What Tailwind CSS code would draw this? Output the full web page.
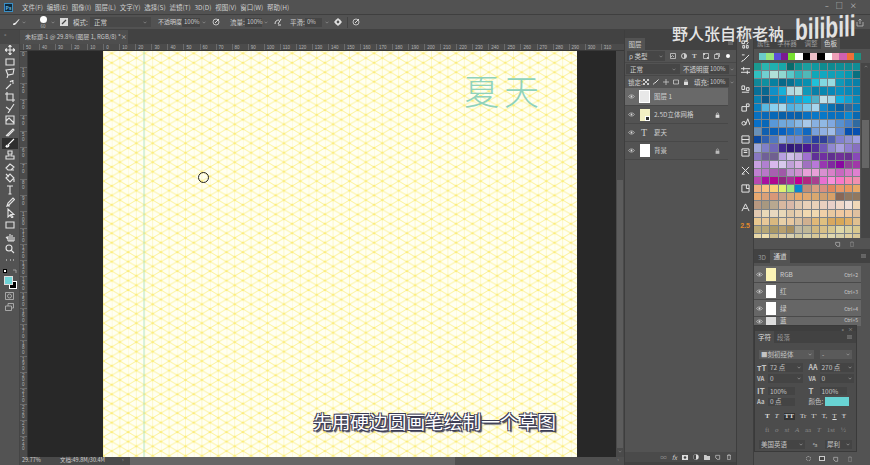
<!DOCTYPE html>
<html lang="zh-CN">
<head>
<meta charset="UTF-8">
<title>Photoshop</title>
<script src="https://cdn.jsdelivr.net/npm/@tailwindcss/browser@4"></script>
</head>
<body class="bg-[#535353]">
<!-- icon symbols -->
<svg class="hidden">
  <symbol id="eye" viewBox="0 0 12 8"><path d="M1 4c2-3.600 8-3.600 10 0-2 3.600-8 3.600-10 0z" fill="none" stroke="currentColor"/><circle cx="6" cy="4" r="1.600" fill="currentColor"/></symbol>
  <symbol id="lock" viewBox="0 0 8 9"><path d="M1 4h6v5H1z" fill="currentColor"/><path d="M2.500 4V2.500a1.500 1.500 0 013 0V4" fill="none" stroke="currentColor"/></symbol>
  <symbol id="chev" viewBox="0 0 6 4"><path d="M.8 .8L3 3l2.200-2.200" fill="none" stroke="currentColor" stroke-width=".8"/></symbol>
  <symbol id="trash" viewBox="0 0 8 9"><path d="M1 2h6M3 1h2M2 2v6.500h4V2" fill="none" stroke="currentColor"/></symbol>
  <symbol id="newdoc" viewBox="0 0 9 9"><path d="M1 2h6v6H3M1 2v4" fill="none" stroke="currentColor"/><path d="M1 6h2v2" fill="currentColor"/></symbol>
  <symbol id="menu" viewBox="0 0 6 4"><path d="M0 .5h6M0 2h6M0 3.500h6" stroke="currentColor" stroke-width=".7"/></symbol>
</svg>

<div class="relative w-[870px] h-[465px] overflow-hidden flex flex-col whitespace-nowrap text-[#cfcfcf] text-[6.500px] leading-none [font-family:'Noto_Sans_CJK_SC','Liberation_Sans',sans-serif]">

  <!-- menu bar -->
  <div class="h-[15px] shrink-0 flex items-center bg-[#525252] border-b border-[#3f3f3f]">
    <div class="ml-[4px] w-[9px] h-[9px] bg-[#0d2b40] border border-[#3a8ec4] text-[#6cc0f0] text-[5px] font-bold flex items-center justify-center">Ps</div>
    <div class="ml-[9px] flex gap-[3.800px]">
      <span>文件(F)</span><span>编辑(E)</span><span>图像(I)</span><span>图层(L)</span><span>文字(Y)</span><span>选择(S)</span><span>滤镜(T)</span><span>3D(D)</span><span>视图(V)</span><span>窗口(W)</span><span>帮助(H)</span>
    </div>
  </div>

  <!-- options bar -->
  <div class="h-[15px] shrink-0 flex items-center bg-[#525252] border-b border-[#424242]">
    <svg class="ml-[12px] w-[8px] h-[8px] text-[#e8e8e8]" viewBox="0 0 8 8"><path d="M1 7c0-2 1-2 2-2L7 1 7.500 1.500 4 6C3.500 7 2 7 1 7z" fill="currentColor"/></svg>
    <svg class="ml-[2px] w-[4px] h-[3px] text-[#aaa]"><use href="#chev"/></svg>
    <div class="ml-[12px] w-[10px] flex flex-col items-center gap-[1px]"><span class="w-[7px] h-[7px] rounded-full bg-white"></span><span class="text-[4.500px] text-[#bbb]">60</span></div>
    <svg class="ml-[3px] w-[4px] h-[3px] text-[#aaa]"><use href="#chev"/></svg>
    <svg class="ml-[5px] w-[8px] h-[8px]" viewBox="0 0 8 8"><path d="M0 0h8v8H0z" fill="#d8d8d8"/><path d="M2 6l4-4" stroke="#444" stroke-width="1.200"/></svg>
    <span class="ml-[5px] w-[14px]">模式:</span>
    <div class="ml-[3px] w-[61px] h-[10px] bg-[#484848] flex items-center justify-between px-[4px]"><span>正常</span><svg class="w-[4px] h-[3px] text-[#aaa]"><use href="#chev"/></svg></div>
    <span class="ml-[7px] w-[24px] text-[6px]">不透明度:</span>
    <div class="w-[18px] h-[9px] bg-[#464646] flex items-center px-[2px] text-[6px]">100%</div>
    <svg class="ml-[2px] w-[4px] h-[3px] text-[#aaa]"><use href="#chev"/></svg>
    <svg class="ml-[6px] w-[8px] h-[8px] text-[#ddd]" viewBox="0 0 8 8"><circle cx="4" cy="4" r="3" fill="none" stroke="currentColor" stroke-width=".8"/><path d="M3 5l4-4" stroke="currentColor"/></svg>
    <span class="ml-[10px] w-[15px]">流量:</span>
    <div class="w-[17px] h-[9px] bg-[#464646] flex items-center px-[2px] text-[6px]">100%</div>
    <svg class="ml-[2px] w-[4px] h-[3px] text-[#aaa]"><use href="#chev"/></svg>
    <svg class="ml-[6px] w-[8px] h-[8px] text-[#ddd]" viewBox="0 0 8 8"><path d="M1 6c0-3 2-4 4-4M4 6l3-5M7 7H4" fill="none" stroke="currentColor"/></svg>
    <span class="ml-[8px] w-[15px]">平滑:</span>
    <div class="w-[17px] h-[9px] bg-[#464646] flex items-center px-[2px] text-[6px]">0%</div>
    <svg class="ml-[3px] w-[4px] h-[3px] text-[#aaa]"><use href="#chev"/></svg>
    <svg class="ml-[5px] w-[8px] h-[8px] text-[#e8e8e8]" viewBox="0 0 8 8"><circle cx="4" cy="4" r="2.200" fill="none" stroke="currentColor" stroke-width="1.600"/><path d="M4 0v1.500M4 6.500V8M0 4h1.500M6.500 4H8" stroke="currentColor"/></svg>
    <span class="ml-[5px] w-px h-[11px] bg-[#424242]"></span>
    <svg class="ml-[4px] w-[8px] h-[8px] text-[#ddd]" viewBox="0 0 8 8"><circle cx="4" cy="4" r="3" fill="none" stroke="currentColor" stroke-width=".8"/><path d="M3 5l4-4" stroke="currentColor"/></svg>
  </div>

  <!-- main -->
  <div class="flex-1 flex min-h-0">

    <!-- tools -->
    <div class="w-[20px] shrink-0 bg-[#535353] flex flex-col items-center border-r border-[#454545]">
      <div class="h-[14px] w-full bg-[#474747] text-[5px] text-[#999] pl-[4px] pt-[1px]">»</div>
      <div id="tools" class="flex flex-col items-center"></div>
      <div class="mt-[1px] w-[14px] flex justify-between items-center h-[8px]"><span class="w-[4px] h-[4px] bg-white border border-black"></span><svg class="w-[4px] h-[4px] text-[#bbb]" viewBox="0 0 4 4"><path d="M0 1h3v3" fill="none" stroke="currentColor" stroke-width=".7"/></svg></div>
      <div class="relative w-[14px] h-[14px]">
        <span class="absolute left-[6px] top-[6px] w-[8px] h-[8px] bg-black border border-white"></span>
        <span class="absolute left-[1px] top-[1px] w-[9px] h-[9px] bg-[#6fd3d6] border border-[#ddd]"></span>
      </div>
      <svg class="mt-[3px] w-[9px] h-[8px] text-[#bbb]" viewBox="0 0 9 8"><path d="M.5 .5h8v7h-8z" fill="none" stroke="currentColor" stroke-width=".8"/><circle cx="4.500" cy="4" r="2" fill="none" stroke="currentColor" stroke-width=".8"/></svg>
      <svg class="mt-[3px] w-[9px] h-[8px] text-[#bbb]" viewBox="0 0 9 8"><path d="M.5 3h6v4.500h-6zM3 3V.5h5.500V5H7" fill="none" stroke="currentColor" stroke-width=".8"/></svg>
    </div>

    <!-- document window -->
    <div class="w-[604px] shrink-0 flex flex-col min-h-0">
      <div class="h-[14px] shrink-0 bg-[#424242] flex items-stretch">
        <div class="w-[108px] bg-[#4e4e4e] flex items-center justify-between px-[5px] text-[#c8c8c8] text-[6px]"><span>未标题-1 @ 29.8% (图层 1, RGB/8) *</span><span>×</span></div>
      </div>
      <div class="h-[7px] shrink-0 flex bg-[#4b4b4b] overflow-hidden border-b border-[#383838]">
        <div id="rulerTop" class="flex ml-[3px] shrink-0"></div>
      </div>
      <div class="flex-1 flex min-h-0">
        <div id="rulerLeft" class="w-[8px] shrink-0 bg-[#4b4b4b] border-r border-[#383838] flex flex-col overflow-hidden"></div>
        <div class="w-[588px] shrink-0 flex bg-[#282828]">
          <div class="w-[75px] shrink-0"></div>
          <div class="relative w-[474px] shrink-0 bg-white overflow-hidden">
            <svg class="absolute inset-0 w-full h-full">
              <defs>
                <pattern id="iso" width="16.400" height="9.470" patternUnits="userSpaceOnUse" patternTransform="translate(8.700 2.300)">
                  <path d="M0 0V9.470M8.200 0V9.470" stroke="#fdf8c4" stroke-width="1" fill="none"/>
                  <path d="M0 0L16.400 9.470M0 9.470L16.400 0" stroke="#fcf29a" stroke-width="1" fill="none"/>
                  <g fill="#fbec7c">
                    <circle cx="0" cy="0" r="1.300"/><circle cx="16.400" cy="0" r="1.300"/><circle cx="0" cy="9.470" r="1.300"/><circle cx="16.400" cy="9.470" r="1.300"/><circle cx="8.200" cy="4.735" r="1.300"/>
                  </g>
                </pattern>
              </defs>
              <rect width="100%" height="100%" fill="#fffff2"/>
              <rect width="100%" height="100%" fill="url(#iso)"/>
              <path d="M41 0V406" stroke="#b4e6c8" stroke-width="1"/>
            </svg>
            <div class="absolute left-[361px] top-[17px] text-[35px] leading-[44px] tracking-[5px] font-light text-[#8ed2bc]">夏天</div>
            <div class="absolute left-[95px] top-[121px] w-[11px] h-[11px] rounded-full border border-[#222]"></div>
          </div>
          <div class="w-[39px] shrink-0"></div>
        </div>
        <div class="w-[8px] shrink-0 bg-[#4a4a4a] flex flex-col items-center">
          <div class="h-[129px]"></div>
          <div class="w-[6px] h-[268px] bg-[#5c5c5c]"></div>
          <svg class="mt-[2px] w-[4px] h-[3px] text-[#999]"><use href="#chev"/></svg>
        </div>
      </div>
      <div class="h-[8px] shrink-0 flex items-center bg-[#4a4a4a] text-[5.500px]">
        <span class="ml-[2px] w-[38px]">29.77%</span>
        <span class="w-[62px]">文档:49.8M/30.4M</span>
        <span class="w-[8px] text-[#aaa]">›</span>
        <div class="w-[325px] h-full bg-[#666]"></div>
        <div class="flex-1 h-full bg-[#505050] flex justify-end items-center pr-[5px] text-[#999]">›</div>
      </div>
    </div>

    <!-- layers panel -->
    <div class="w-[112px] shrink-0 flex flex-col bg-[#535353] border-l border-[#3e3e3e]">
      <div class="h-[20px] shrink-0 bg-[#424242] flex items-end justify-between pr-[3px]"><div class="w-[20px] h-[12px] bg-[#535353] flex items-center justify-center">图层</div><svg class="mb-[5px] w-[5px] h-[4px] text-[#999]"><use href="#menu"/></svg></div>
      <div class="h-[13px] shrink-0 flex items-center pl-[2px] border-b border-[#484848]">
        <div class="w-[38px] h-[10px] bg-[#464646] flex items-center px-[2px] justify-between"><span>ρ 类型</span><svg class="w-[4px] h-[3px] text-[#aaa]"><use href="#chev"/></svg></div>
        <div class="ml-[5px] flex items-center gap-[5px]">
          <svg class="w-[6px] h-[6px] text-[#ccc]" viewBox="0 0 6 6"><path d="M.5 .5h5v5h-5zM1 4l1.500-1.500L4 4" fill="none" stroke="currentColor" stroke-width=".8"/></svg>
          <svg class="w-[6px] h-[6px] text-[#ccc]" viewBox="0 0 6 6"><circle cx="3" cy="3" r="2.500" fill="none" stroke="currentColor"/><path d="M3 .5a2.500 2.500 0 010 5z" fill="currentColor"/></svg>
          <span class="w-[6px] text-[7px] font-bold [font-family:'Liberation_Serif',serif]">T</span>
          <svg class="w-[6px] h-[6px] text-[#ccc]" viewBox="0 0 6 6"><path d="M.5 .5h5v5h-5z" fill="none" stroke="currentColor" stroke-width=".8"/><path d="M0 0h2v2H0zM4 4h2v2H4z" fill="currentColor"/></svg>
          <svg class="w-[6px] h-[6px] text-[#ccc]" viewBox="0 0 6 6"><path d="M.5 1.500h4v4h-4zM2 1.500V.5h3.500V4" fill="none" stroke="currentColor" stroke-width=".8"/></svg>
          <span class="ml-[1px] w-[4px] h-[4px] rounded-full bg-white"></span>
        </div>
      </div>
      <div class="h-[13px] shrink-0 flex items-center pl-[1px] border-b border-[#484848]">
        <div class="w-[54px] h-[10px] bg-[#464646] flex items-center px-[4px] justify-between"><span>正常</span><svg class="w-[4px] h-[3px] text-[#aaa]"><use href="#chev"/></svg></div>
        <span class="ml-[3px] w-[26px]">不透明度:</span>
        <div class="w-[20px] h-[9px] bg-[#464646] flex items-center px-[1px] text-[6px]">100%</div>
        <svg class="ml-[1px] w-[4px] h-[3px] text-[#aaa]"><use href="#chev"/></svg>
      </div>
      <div class="h-[12px] shrink-0 flex items-center pl-[3px]">
        <span class="w-[15px]">锁定:</span>
        <div class="flex items-center gap-[4px]">
          <svg class="w-[6px] h-[6px] text-[#ccc]" viewBox="0 0 6 6"><path d="M0 0h2v2H0zM4 0h2v2H4zM2 2h2v2H2zM0 4h2v2H0zM4 4h2v2H4z" fill="currentColor"/></svg>
          <svg class="w-[6px] h-[6px] text-[#ddd]" viewBox="0 0 6 6"><path d="M.5 5.500c0-1.500 1-1.500 1.500-1.500L5.500 .5" fill="none" stroke="currentColor"/></svg>
          <svg class="w-[6px] h-[6px] text-[#ccc]" viewBox="0 0 6 6"><path d="M3 0v6M0 3h6" stroke="currentColor" stroke-width=".8"/></svg>
          <svg class="w-[6px] h-[6px] text-[#ccc]" viewBox="0 0 6 6"><path d="M.5 1h5v4h-5z" fill="none" stroke="currentColor" stroke-width=".8"/></svg>
          <svg class="w-[6px] h-[6px] text-[#ddd]"><use href="#lock"/></svg>
        </div>
        <span class="ml-[5px] w-[15px]">填充:</span>
        <div class="w-[20px] h-[9px] bg-[#464646] flex items-center px-[1px] text-[6px]">100%</div>
        <svg class="ml-[1px] w-[4px] h-[3px] text-[#aaa]"><use href="#chev"/></svg>
      </div>
      <div class="w-[103px] flex flex-col">
        <div class="h-[18px] flex items-center bg-[#696969] border-b border-[#484848]">
          <svg class="ml-[3px] w-[7px] h-[5px] text-[#ddd]"><use href="#eye"/></svg>
          <div class="ml-[4px] w-[11px] h-[13px] bg-[#e8e8e8] border border-white"></div>
          <span class="ml-[4px]">图层 1</span>
        </div>
        <div class="h-[18px] flex items-center border-b border-[#484848]">
          <svg class="ml-[3px] w-[7px] h-[5px] text-[#ddd]"><use href="#eye"/></svg>
          <div class="relative ml-[5px] w-[10px] h-[12px] bg-[#f3f0c4]"><span class="absolute right-0 bottom-0 w-[5px] h-[5px] bg-[#333] border border-white"></span></div>
          <span class="ml-[4px] flex-1">2.5D立体网格</span>
          <svg class="mr-[8px] w-[5px] h-[6px] text-[#ddd]"><use href="#lock"/></svg>
        </div>
        <div class="h-[18px] flex items-center border-b border-[#484848]">
          <svg class="ml-[3px] w-[7px] h-[5px] text-[#ddd]"><use href="#eye"/></svg>
          <span class="ml-[6px] w-[8px] text-[10px] [font-family:'Liberation_Serif',serif]">T</span>
          <span class="ml-[5px]">夏天</span>
        </div>
        <div class="h-[18px] flex items-center border-b border-[#484848]">
          <svg class="ml-[3px] w-[7px] h-[5px] text-[#ddd]"><use href="#eye"/></svg>
          <div class="ml-[5px] w-[10px] h-[13px] bg-white"></div>
          <span class="ml-[4px] flex-1">背景</span>
          <svg class="mr-[8px] w-[5px] h-[6px] text-[#bbb]"><use href="#lock"/></svg>
        </div>
      </div>
      <div class="flex-1"></div>
      <div class="h-[10px] shrink-0 bg-[#4a4a4a] flex items-center justify-end gap-[5px] pr-[4px] text-[#ccc]">
        <span class="text-[#888]">∞</span><span class="italic">fx</span>
        <svg class="w-[6px] h-[5px]" viewBox="0 0 6 5"><path d="M0 0h6v5H0z" fill="#ddd"/><circle cx="3" cy="2.500" r="1.300" fill="#444"/></svg>
        <svg class="w-[6px] h-[6px]" viewBox="0 0 6 6"><circle cx="3" cy="3" r="2.700" fill="#ddd"/><path d="M3 .5a2.500 2.500 0 000 5z" fill="#444"/></svg>
        <svg class="w-[6px] h-[5px]" viewBox="0 0 6 5"><path d="M0 0h2.500l.5 1h3v4H0z" fill="#ccc"/></svg>
        <svg class="w-[6px] h-[6px]"><use href="#newdoc"/></svg>
        <svg class="w-[6px] h-[6px]"><use href="#trash"/></svg>
      </div>
      <div class="h-[3px] shrink-0 bg-[#424242]"></div>
    </div>

    <!-- icon strip -->
    <div class="w-[18px] shrink-0 bg-[#4f4f4f] border-x border-[#3e3e3e] flex flex-col items-center text-[#e4e4e4]">
      <div id="strip" class="flex flex-col items-center pt-[10px]"></div>
      <span class="text-[7px] font-bold text-[#e08a2c] [font-family:'Liberation_Sans',sans-serif]">2.5</span>
    </div>

    <!-- right panels -->
    <div class="relative flex-1 flex flex-col bg-[#535353] min-w-0">
      <div class="h-[19px] shrink-0 bg-[#424242] flex items-end text-[#9a9a9a]">
        <span class="w-[19px] h-[11px] flex items-center justify-center">属性</span>
        <span class="w-[28px] h-[11px] flex items-center justify-center">学样器</span>
        <span class="w-[20px] h-[11px] flex items-center justify-center">调整</span>
        <span class="w-[19px] h-[11px] bg-[#535353] text-[#ddd] flex items-center justify-center">色板</span>
      </div>
      <div id="swatchTop" class="h-[14px] shrink-0 pl-[5px] flex items-center"></div>
      <div class="h-[175px] shrink-0 flex overflow-hidden">
        <div id="swatches" class="w-[106px] shrink-0 grid grid-cols-13 gap-px auto-rows-[7.150px] bg-[#7c8288]"></div>
        <div class="ml-[1px] w-[9px] bg-[#464646] flex flex-col items-center pt-[2px] text-[#999]">
          <svg class="w-[4px] h-[3px] rotate-180"><use href="#chev"/></svg>
          <div class="mt-[52px] w-[7px] h-[48px] bg-[#666]"></div>
        </div>
      </div>
      <div class="h-[11px] shrink-0 flex items-center justify-end gap-[8px] pr-[15px] text-[#bbb]">
        <svg class="w-[6px] h-[6px]"><use href="#newdoc"/></svg>
        <svg class="w-[6px] h-[6px] text-[#888]"><use href="#trash"/></svg>
      </div>
      <div class="h-[14px] shrink-0 bg-[#424242] flex items-end justify-between pr-[4px] text-[#9a9a9a]">
        <div class="flex items-end">
          <span class="w-[16px] h-[12px] flex items-center justify-center">3D</span>
          <span class="w-[20px] h-[13px] bg-[#535353] text-[#ddd] flex items-center justify-center">通道</span>
        </div>
        <svg class="mb-[5px] w-[5px] h-[4px]"><use href="#menu"/></svg>
      </div>
      <div class="flex flex-col w-[107px] pt-[3px]">
        <div class="h-[17px] flex items-center bg-[#666] border-b border-[#4a4a4a]">
          <svg class="ml-[2px] w-[7px] h-[5px] text-[#ddd]"><use href="#eye"/></svg>
          <div class="ml-[3px] w-[10px] h-[13px] bg-[#fbf3b6]"></div>
          <span class="ml-[4px] flex-1">RGB</span><span class="mr-[3px] text-[5px]">Ctrl+2</span>
        </div>
        <div class="h-[17px] flex items-center bg-[#666] border-b border-[#4a4a4a]">
          <svg class="ml-[2px] w-[7px] h-[5px] text-[#ddd]"><use href="#eye"/></svg>
          <div class="ml-[3px] w-[10px] h-[13px] bg-white"></div>
          <span class="ml-[4px] flex-1">红</span><span class="mr-[3px] text-[5px]">Ctrl+3</span>
        </div>
        <div class="h-[17px] flex items-center bg-[#666] border-b border-[#4a4a4a]">
          <svg class="ml-[2px] w-[7px] h-[5px] text-[#ddd]"><use href="#eye"/></svg>
          <div class="ml-[3px] w-[10px] h-[13px] bg-white"></div>
          <span class="ml-[4px] flex-1">绿</span><span class="mr-[3px] text-[5px]">Ctrl+4</span>
        </div>
        <div class="h-[9px] overflow-hidden flex items-start bg-[#666]">
          <svg class="ml-[2px] mt-[2px] w-[7px] h-[5px] text-[#ddd]"><use href="#eye"/></svg>
          <div class="ml-[3px] w-[10px] h-[13px] bg-[#dcdcdc]"></div>
          <span class="ml-[4px] flex-1">蓝</span><span class="mr-[3px] text-[5px]">Ctrl+5</span>
        </div>
      </div>
      <div class="flex-1"></div>
      <div class="h-[13px] shrink-0 flex items-center justify-end gap-[8px] pr-[17px] text-[#bbb]">
        <span class="w-[5px] h-[5px] rounded-full border border-dotted border-[#aaa]"></span>
        <svg class="w-[6px] h-[5px]" viewBox="0 0 6 5"><path d="M0 0h6v5H0z" fill="#ccc"/><path d="M1 1h4v3H1z" fill="#444"/></svg>
        <svg class="w-[6px] h-[6px]"><use href="#newdoc"/></svg>
        <svg class="w-[6px] h-[6px] text-[#888]"><use href="#trash"/></svg>
      </div>

      <!-- floating character panel -->
      <div class="absolute left-0 top-[295px] w-[103px] h-[127px] bg-[#4c4c4c] border border-[#3a3a3a] flex flex-col text-[#c4c4c4]">
        <div class="h-[5px] shrink-0 bg-[#3e3e3e] flex justify-end items-center gap-[4px] pr-[3px] text-[5px] text-[#aaa]"><span>»</span><span>×</span></div>
        <div class="h-[12px] shrink-0 bg-[#424242] flex items-end justify-between pr-[4px]">
          <div class="flex items-end"><span class="w-[19px] h-[12px] bg-[#4c4c4c] text-[#ddd] flex items-center justify-center">字符</span><span class="w-[19px] h-[12px] text-[#999] flex items-center justify-center">段落</span></div>
          <svg class="mb-[4px] w-[5px] h-[4px] text-[#999]"><use href="#menu"/></svg>
        </div>
        <div class="mt-[7px] px-[4px] flex justify-between">
          <div class="w-[55px] h-[9px] bg-[#5a5a5a] flex items-center justify-between px-[2px]"><span>■刻初经体</span><svg class="w-[4px] h-[3px] text-[#bbb]"><use href="#chev"/></svg></div>
          <div class="w-[32px] h-[9px] bg-[#5a5a5a] flex items-center justify-between px-[2px]"><span>-</span><svg class="w-[4px] h-[3px] text-[#bbb]"><use href="#chev"/></svg></div>
        </div>
        <div class="mt-[4px] px-[2px] grid grid-cols-2 gap-x-[6px] gap-y-[2px]">
          <div class="flex items-center gap-[2px]"><b class="w-[9px] text-[8px] font-bold">тT</b><div class="flex-1 h-[9px] bg-[#444] flex items-center justify-between px-[2px]"><span>72 点</span><svg class="w-[4px] h-[3px] text-[#bbb]"><use href="#chev"/></svg></div></div>
          <div class="flex items-center gap-[2px]"><b class="w-[9px] text-[7px] font-bold">AA</b><div class="flex-1 h-[9px] bg-[#444] flex items-center justify-between px-[2px]"><span>270 点</span><svg class="w-[4px] h-[3px] text-[#bbb]"><use href="#chev"/></svg></div></div>
          <div class="flex items-center gap-[2px]"><b class="w-[9px] text-[6px] font-bold">VA</b><div class="flex-1 h-[9px] bg-[#444] flex items-center justify-between px-[2px]"><span>0</span><svg class="w-[4px] h-[3px] text-[#bbb]"><use href="#chev"/></svg></div></div>
          <div class="flex items-center gap-[2px]"><b class="w-[9px] text-[6px] font-bold">VA</b><div class="flex-1 h-[9px] bg-[#444] flex items-center justify-between px-[2px]"><span>0</span><svg class="w-[4px] h-[3px] text-[#bbb]"><use href="#chev"/></svg></div></div>
          <div class="mt-[2px] flex items-center gap-[2px]"><b class="w-[9px] text-[8px] font-bold">IT</b><div class="w-[27px] h-[8px] bg-[#444] flex items-center px-[2px]">100%</div></div>
          <div class="mt-[2px] flex items-center gap-[2px]"><b class="w-[9px] text-[8px] font-bold">T</b><div class="w-[27px] h-[8px] bg-[#444] flex items-center px-[2px]">100%</div></div>
          <div class="flex items-center gap-[2px]"><b class="w-[9px] text-[6px] font-bold">Aa</b><div class="w-[27px] h-[8px] bg-[#444] flex items-center px-[2px]">0 点</div></div>
          <div class="flex items-center gap-[2px]"><span class="w-[14px]">颜色:</span><div class="w-[24px] h-[9px] bg-[#68d3d3]"></div></div>
        </div>
        <div class="mt-[6px] px-[10px] flex justify-between items-center h-[9px] text-[7px] text-[#ddd] [font-family:'Liberation_Serif',serif]">
          <b>T</b><i>T</i><b class="bg-[#333] px-[1px]">TT</b><span>Tr</span><span>T'</span><span>T,</span><u>T</u><span>Ŧ</span>
        </div>
        <div class="mt-[5px] px-[10px] flex justify-between items-center h-[9px] text-[7px] text-[#888] [font-family:'Liberation_Serif',serif]">
          <span>fi</span><i>o</i><i>st</i><i>A</i><span>aa</span><i>T</i><span>1st</span><span>½</span>
        </div>
        <div class="mt-[5px] px-[4px] flex items-center justify-between">
          <div class="w-[46px] h-[9px] bg-[#444] flex items-center justify-between px-[2px]"><span>美国英语</span><svg class="w-[4px] h-[3px] text-[#bbb]"><use href="#chev"/></svg></div>
          <span class="text-[5px]">ªa</span>
          <div class="w-[27px] h-[9px] bg-[#444] flex items-center justify-between px-[2px]"><span>犀利</span><svg class="w-[4px] h-[3px] text-[#bbb]"><use href="#chev"/></svg></div>
        </div>
      </div>
    </div>
  </div>

  <!-- video overlays -->
  <div class="absolute left-[825px] top-[2px] flex gap-[7px] text-[#ccc] text-[7px]"><span>–</span><span>□</span><span>×</span></div>
  <div class="absolute left-[672px] top-[24px] text-[16px] leading-[18px] font-medium text-[#e4e4e4]">野人张自称老衲</div>
  <div class="absolute left-[795px] top-[18px] text-[21px] leading-[20px] font-bold text-[#e2e2e2] scale-y-[1.4] -skew-y-3 [font-family:'Liberation_Sans',sans-serif]">bilibili</div>
  <svg class="absolute left-[856px] top-[18px] w-[8px] h-[9px] text-[#bbb]" viewBox="0 0 8 9"><path d="M1 4v4h6V4M4 6V1M2.500 2.500L4 1l1.500 1.500" fill="none" stroke="currentColor" stroke-width=".8"/></svg>
  <div class="absolute left-[313px] top-[408px] text-[18.700px] leading-[26px] text-white [text-shadow:1px_1px_0_#3c3c54,-1px_-1px_0_#3c3c54,1px_-1px_0_#3c3c54,-1px_1px_0_#3c3c54,2px_2px_1px_#3c3c54]">先用硬边圆画笔绘制一个草图</div>
</div>

<script>
  // rulers: one label every 10 units
  const rulerTop = document.getElementById('rulerTop');
  [50,40,30,20,10,0,10,20,30,40,50,60,70,80,90,100,110,120,130,140,150,160,170,180,190,200,210,220,230,240,250,260,270,280,290,300,310].forEach(n => {
    const t = document.createElement('div');
    t.className = 'w-[16.050px] h-[7px] shrink-0 border-l border-[#6a6a6a] pl-[2px] text-[4.500px] leading-[7px] text-[#b4b4b4] [font-family:Liberation_Sans,sans-serif]';
    t.textContent = n;
    rulerTop.appendChild(t);
  });
  const rulerLeft = document.getElementById('rulerLeft');
  for (let n = 0; n < 25; n++) {
    const t = document.createElement('div');
    t.className = 'h-[16.050px] shrink-0 border-t border-[#6a6a6a] pl-[2px] pt-[1px] text-[4.500px] leading-[4.500px] text-[#b4b4b4] [font-family:Liberation_Sans,sans-serif]';
    t.innerHTML = String(n * 10).split('').join('<br>');
    rulerLeft.appendChild(t);
  }

  // toolbar icons, top to bottom
  const toolPaths = [
    'M5 0v10M0 5h10M5 0L3.500 2M5 0l1.500 2M5 10L3.500 8M5 10l1.500-2M0 5l2-1.500M0 5l2 1.500M10 5L8 3.500M10 5L8 6.500',
    'M1 2h8v6H1z',
    'M1 2l8-1-1 5-5 1zM3 7l-1 3',
    'M1 9l5-5M7 0v2M9 3H7M5 1l1 1M8.500 .5L7.500 1.500',
    'M2 0v8h8M0 2h8v8',
    'M1 4l4 3 4-6M5 7l-2 3',
    'M1 1h8v8H1zM1 6l3-3 5 5',
    'M2 8L8 2 9 3 3 9zM1 9l1-1',
    'M1 9c0-2 1-2 2-2L9 1M1 9c1 0 3 0 3-2',
    'M3 1h4v3H6v2h3v3H1V6h3V4H3z',
    'M1 6l4-4 4 3-3 3H3zM3 8h6',
    'M1 5l4-4 4 4-4 4zM1 1l3 3M9 6v3',
    'M2 1h6M5 1v8M3.500 9h3',
    'M2 9l1-3 5-5 1.500 1.500-5 5zM2 9h3',
    'M3 1v8l2-2 2 3 1-1-2-2.500h3z',
    'M1 2h8v6H1z',
    'M3 9V4M5 9V2M7 9V3M9 9V5M3 9h6M1 5l2 2',
    'M4 1a3 3 0 110 6 3 3 0 010-6zM6 6l3 3',
    'M1 5h1M5 5h1M8 5h1'
  ];
  const tools = document.getElementById('tools');
  toolPaths.forEach((d, i) => {
    const box = document.createElement('div');
    box.className = i === 8 ? 'w-[16px] h-[11.700px] flex items-center justify-center bg-[#2e2e2e] text-white' : 'w-[16px] h-[11.700px] flex items-center justify-center text-[#e4e4e4]';
    box.innerHTML = `<svg class="w-[10px] h-[10px]" viewBox="0 0 10 10" fill="none" stroke="currentColor" stroke-width="1.100"><path d="${d}"/></svg>`;
    tools.appendChild(box);
  });

  // collapsed panel icons, with the space under each
  const stripIcons = [
    ['M1 1h3v3H1zM6 1l2 2-2 2M2 6h2v3H2zM6 6h2v3H6z', 5],
    ['M1 9c0-2 1-2 2-2L9 1M1 1h3', 3],
    ['M0 3h10M0 7h10M3 1v4M7 5v4', 10],
    ['M1 1h3v4H1zM1 8h8M6 3h3v3H6z', 9],
    ['M6 1h3v3H6zM1 4h5v5H1z', 5],
    ['M1 7a2 2 0 104 0 2 2 0 00-4 0M5 9l2.500-7L10 9', 9],
    ['M1 1h8v8H1zM1 5h8', 4],
    ['M1 1h8v8H1zM3 3h4M3 5h4', 9],
    ['M1 1l8 8M9 1L1 9M1 9h3', 9],
    ['M1 1h8v8H1zM6 1v4h3', 10],
    ['M1 9L5 1l4 8M3 6h4', 10]
  ];
  const strip = document.getElementById('strip');
  stripIcons.forEach(([d, gap]) => {
    const s = document.createElementNS('http://www.w3.org/2000/svg', 'svg');
    s.setAttribute('viewBox', '0 0 10 10');
    s.setAttribute('width', '9');
    s.setAttribute('height', '9');
    s.style.marginBottom = gap + 'px';
    s.innerHTML = `<path d="${d}" fill="none" stroke="currentColor" stroke-width="1.100"/>`;
    strip.appendChild(s);
  });

  // swatches
  const topColors = ['6bcbcb','9ae67c','5a50d8','7a1a90','76e030','ffffff','000000','ecc0c8','000000','ffffff','f0a0b8','d060b0','f07038','209080'];
  topColors.forEach(c => {
    const s = document.createElement('span');
    s.className = 'w-[7.300px] h-[7px] shrink-0';
    s.style.background = '#' + c;
    document.getElementById('swatchTop').appendChild(s);
  });
  const rows = `1a9a90 2ab5b0 20b0b0 18a8a8 0a6a6a 109090 1aa0a0 1098a0 108c90 0f8a90 0f8d95 108a92 0f8d96
30c0c0 70d0d0 b0e0d8 90d8d0 58c8c8 30b0b8 50b8b8 10a8b8 10a8c0 10a0b8 10a0b8 0898b0 087080
108898 1090a0 0880a0 086888 087090 0888a8 0890b0 20c0d8 80d8e0 98dce0 1098b8 0888b0 0880a8
087098 086890 1090c8 18b0d8 b0d8e0 b8e0e0 1098b8 0880a8 0888b0 0888b8 0890c0 0888b8 0880b0
0880b0 0a5888 0880b8 0888c8 1098d8 10a8d8 10b8e0 50b0c8 c0e0e8 a8d8e8 10b0e0 10a0d0 0888b8
0880c0 58b8e0 88d0f0 a8d8ec 50b0e0 60b8e0 80c8e8 a8d4ec 1888c8 0870b0 0a60a0 306898 0878b8
0870c0 0868b8 0868b8 0860a8 0860b0 0860a8 0870c0 0878c8 0878c8 0870c0 0870c0 0888d0 0868b0
0870c8 0868b8 5898d8 70a8dc 70a8dc 88b8e4 a8c8e8 88b0e0 90b8e4 80a8e0 5890d0 4880c8 306aa0
6890b8 1060b0 0860b8 0860c0 1870c8 3080d0 1068c0 78a0dc 90b0e4 a0bce8 6088d0 0850b0 0850b0
0a48a0 3060b0 5078c0 90a8e0 7088d0 7088d0 4068b8 2840a0 304098 5060b0 8080d0 9090d0 a0a0e0
a0a8d8 8080c8 7068b8 402890 301878 382080 481890 503098 7058b8 9088d0 a8a0e0 9080d0 8870c0
8878c0 706098 706090 b8a0e0 d0c0e8 c8b0e0 a070d0 603098 7030a0 603090 703098 683090 8848b8
c8a0e0 b080d0 d8b8ec d8c8ec c0a0d8 d8b0e4 a070c0 b878d8 9838b0 8028a0 8808a0 904098 a038a8
c080d0 b878c8 a860b0 a058a8 c090d0 d090d0 e8a0d8 e8a0d8 d890d0 d880c8 c868c0 d878c8 e080d0
b848b0 a810a0 b00890 902880 a83098 c00090 b02880 a84090 e870d0 f890d8 f878c8 f88ab0 f090b0
f0b080 f8c080 f8d078 e0f070 a0e880 0888d0 c09078 d8a080 d89080 e08860 e89868 e89860 e8a868
e8a870 d8a078 d89878 c8a088 d8a878 e8a868 e0a870 d8a870 d0a070 d8a068 886858 907860 907860
b89880 a89880 b8a890 d8b8a0 d8b8a8 e0c8b0 e8d0b8 e8d0b8 e8d0c0 e8d0c8 f0d8c8 f0e0d8 f0d8b8
e0c8b0 e8d8b8 e8d8c0 e8d8b8 e0c8a8 e8d0b0 f0d8b0 f0d8b0 f0d0a8 e8c8a0 f0c8a0 f0c8a0 e0c0a0
e8c890 e8c898 d8b880 e8d0a8 e8c8a0 d8c0a0 d0b090 e0b878 e0c080 d8a860 d8a858 e0b068 e0c090
b8a878 b8a878 a89868 b8a070 a89060 c0b8a0 c0b898 d0b880 d8c088 d8c890 e0d8a8 d8d0a0 d8c890
e8d8a8 f0e0b0 d0c090 e0d0a8 d8d0b0 d0c8a0 d8d0a8 d8c898 e0d0a0 e0d8b0 d8d0a8 e0d0a0 d8c898`;
  const swatches = document.getElementById('swatches');
  rows.split(/\s+/).forEach(c => {
    const s = document.createElement('span');
    s.style.background = '#' + c;
    swatches.appendChild(s);
  });
</script>
</body>
</html>
